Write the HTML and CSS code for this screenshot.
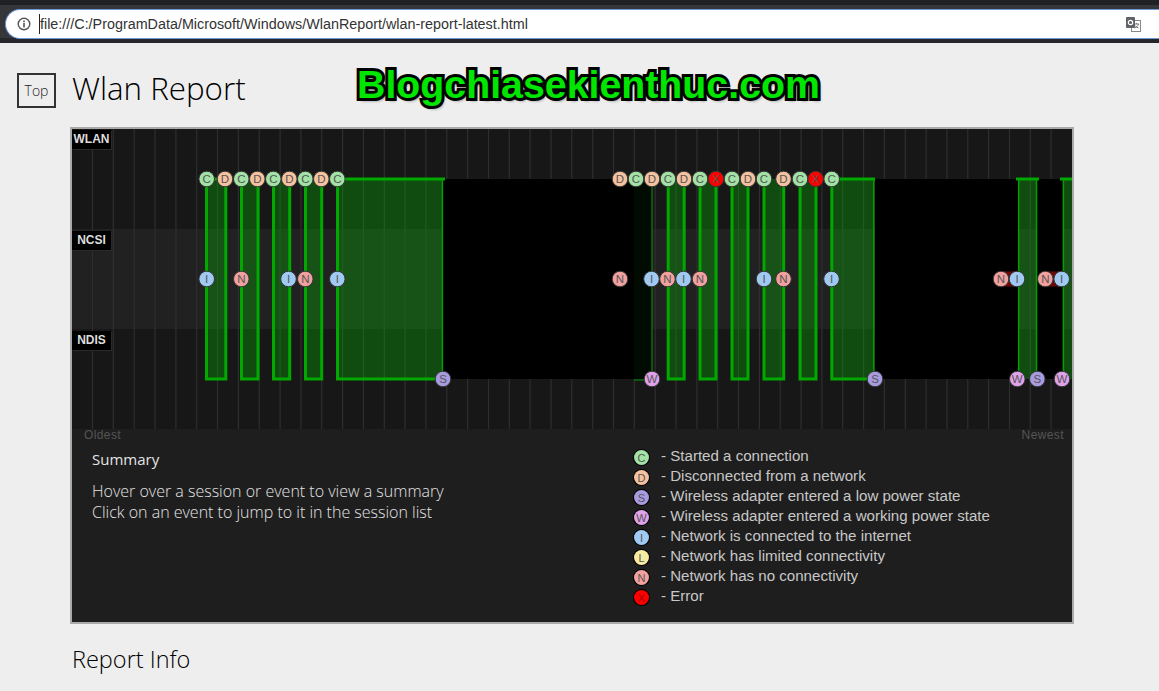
FILE: index.html
```html
<!DOCTYPE html>
<html lang="en">
<head>
    <meta charset="UTF-8">
    <title>Wlan Report</title>
    <link rel="stylesheet" href="styles.css">
</head>
<body>
    <div class="toolbar">
        <div class="omnibox">
            <svg class="info-icon" width="14" height="14" viewBox="0 0 14 14">
                <circle cx="7" cy="7" r="5.8" fill="none" stroke="#555" stroke-width="1.4"/>
                <rect x="6.2" y="6" width="1.6" height="4.4" fill="#555"/>
                <rect x="6.2" y="3.6" width="1.6" height="1.6" fill="#555"/>
            </svg>
            <span class="url">file:///C:/ProgramData/Microsoft/Windows/WlanReport/wlan-report-latest.html</span>
            <svg class="translate-icon" width="15" height="15" viewBox="0 0 15 15">
                <rect x="5.5" y="3.5" width="9" height="11" fill="#fff" stroke="#888"/>
                <path d="M8 7h5M10.5 6v1M12.5 7c-.5 2-2 3.500-4 4M9 8.500c.8 1.200 2 2 3.500 2.500" fill="none" stroke="#777"/>
                <rect x="0" y="0" width="9" height="11" rx="1" fill="#5f6368"/>
                <circle cx="4.500" cy="5.500" r="2.200" fill="none" stroke="#fff" stroke-width="1.200"/>
            </svg>
        </div>
    </div>

    <div class="page">
        <div class="watermark">Blogchiasekienthuc.com</div>

        <div class="page-head">
            <a class="top-btn">Top</a>
            <h1 class="title">Wlan Report</h1>
        </div>

        <div class="chart">
            <svg class="timeline" width="1000" height="300" viewBox="72 129 1000 300">
                <!-- rows -->
                <rect class="row" x="72" y="129" width="1000" height="100"/>
                <rect class="row-mid" x="72" y="229" width="1000" height="100"/>
                <rect class="row" x="72" y="329" width="1000" height="100"/>

                <!-- grid -->
                <path class="grid" d="M92.500 149V429M113.300 129V429M134.200 129V429M155 129V429M175.900 129V429M196.700 129V429M217.500 129V429M238.400 129V429M259.200 129V429M280.100 129V429M300.900 129V429M321.700 129V429M342.600 129V429M363.400 129V429M384.300 129V429M405.100 129V429M425.900 129V429M446.800 129V429M467.600 129V429M488.500 129V429M509.300 129V429M530.100 129V429M551 129V429M571.800 129V429M592.700 129V429M613.500 129V429M634.300 129V429M655.200 129V429M676 129V429M696.900 129V429M717.700 129V429M738.500 129V429M759.400 129V429M780.200 129V429M801.100 129V429M821.900 129V429M842.700 129V429M863.600 129V429M884.400 129V429M905.300 129V429M926.100 129V429M946.900 129V429M967.800 129V429M988.600 129V429M1009.500 129V429M1030.300 129V429M1051.100 129V429"/>

                <!-- time with no data -->
                <rect class="gap" x="443" y="179" width="191" height="200"/>
                <rect class="gap-dim" x="634" y="179" width="18" height="200"/>
                <rect class="gap" x="875" y="179" width="143" height="200"/>
                <rect class="gap" x="1037" y="179" width="26" height="200"/>

                <!-- sessions -->
                <rect class="session" x="206" y="179" width="20" height="200"/>
                <rect class="session" x="241" y="179" width="17" height="200"/>
                <rect class="session" x="273" y="179" width="17" height="200"/>
                <rect class="session" x="305" y="179" width="17" height="200"/>
                <rect class="session" x="337" y="179" width="106" height="200"/>
                <rect class="session" x="668" y="179" width="16" height="200"/>
                <rect class="session" x="700" y="179" width="16" height="200"/>
                <rect class="session" x="732" y="179" width="16" height="200"/>
                <rect class="session" x="764" y="179" width="20" height="200"/>
                <rect class="session" x="800" y="179" width="16" height="200"/>
                <rect class="session" x="832" y="179" width="42" height="200"/>
                <rect class="session" x="1018" y="179" width="19" height="200"/>
                <rect class="session" x="1063" y="179" width="9" height="200"/>

                <path class="edge" d="M206.500 179V379H225.800V179H206.500M241.500 179V379H258V179M273.500 179V379H289.700V179M305.500 179V379H321.700V179M337.500 179V379H443M337.500 179H445M668.200 179V379H684.200V179M700 179V379H716V179M732 179V379H748V179M764 179V379H783.700V179M800 179V379H816V179M831.800 179V379H875M831.800 179H875M1016 179H1039M1060 179H1072M1030 379H1040"/>
                <path class="edge-thin" d="M442.400 179V379M873.800 179V379M1018.700 179V379M1036.500 179V379M1063.400 179V379"/>
                <path class="edge-dim" d="M652 179V379M634 380H652"/>
                <path class="offline" d="M1001 279H1017M1045 279H1062"/>

                <!-- WLAN events -->
                <circle class="c" cx="206.700" cy="179" r="7.800"/><text x="206.700" y="183">C</text>
                <circle class="d" cx="225" cy="179" r="7.800"/><text x="225" y="183">D</text>
                <circle class="c" cx="241.300" cy="179" r="7.800"/><text x="241.300" y="183">C</text>
                <circle class="d" cx="257.300" cy="179" r="7.800"/><text x="257.300" y="183">D</text>
                <circle class="c" cx="273.300" cy="179" r="7.800"/><text x="273.300" y="183">C</text>
                <circle class="d" cx="289.300" cy="179" r="7.800"/><text x="289.300" y="183">D</text>
                <circle class="c" cx="305.300" cy="179" r="7.800"/><text x="305.300" y="183">C</text>
                <circle class="d" cx="321.300" cy="179" r="7.800"/><text x="321.300" y="183">D</text>
                <circle class="c" cx="337.300" cy="179" r="7.800"/><text x="337.300" y="183">C</text>
                <circle class="d" cx="620" cy="179" r="7.800"/><text x="620" y="183">D</text>
                <circle class="c" cx="636" cy="179" r="7.800"/><text x="636" y="183">C</text>
                <circle class="d" cx="652" cy="179" r="7.800"/><text x="652" y="183">D</text>
                <circle class="c" cx="668" cy="179" r="7.800"/><text x="668" y="183">C</text>
                <circle class="d" cx="684" cy="179" r="7.800"/><text x="684" y="183">D</text>
                <circle class="c" cx="700" cy="179" r="7.800"/><text x="700" y="183">C</text>
                <circle class="x" cx="716" cy="179" r="7.800"/><text x="716" y="183">X</text>
                <circle class="c" cx="732" cy="179" r="7.800"/><text x="732" y="183">C</text>
                <circle class="d" cx="748" cy="179" r="7.800"/><text x="748" y="183">D</text>
                <circle class="c" cx="764" cy="179" r="7.800"/><text x="764" y="183">C</text>
                <circle class="d" cx="783.500" cy="179" r="7.800"/><text x="783.500" y="183">D</text>
                <circle class="c" cx="800" cy="179" r="7.800"/><text x="800" y="183">C</text>
                <circle class="x" cx="815.700" cy="179" r="7.800"/><text x="815.700" y="183">X</text>
                <circle class="c" cx="831.700" cy="179" r="7.800"/><text x="831.700" y="183">C</text>

                <!-- NCSI events -->
                <circle class="i" cx="206.700" cy="279" r="7.800"/><text x="206.700" y="283">I</text>
                <circle class="n" cx="241.300" cy="279" r="7.800"/><text x="241.300" y="283">N</text>
                <circle class="i" cx="288.500" cy="279" r="7.800"/><text x="288.500" y="283">I</text>
                <circle class="n" cx="305.300" cy="279" r="7.800"/><text x="305.300" y="283">N</text>
                <circle class="i" cx="337.300" cy="279" r="7.800"/><text x="337.300" y="283">I</text>
                <circle class="n" cx="620" cy="279" r="7.800"/><text x="620" y="283">N</text>
                <circle class="i" cx="651.500" cy="279" r="7.800"/><text x="651.500" y="283">I</text>
                <circle class="n" cx="667.500" cy="279" r="7.800"/><text x="667.500" y="283">N</text>
                <circle class="i" cx="683.500" cy="279" r="7.800"/><text x="683.500" y="283">I</text>
                <circle class="n" cx="700" cy="279" r="7.800"/><text x="700" y="283">N</text>
                <circle class="i" cx="764" cy="279" r="7.800"/><text x="764" y="283">I</text>
                <circle class="n" cx="783.500" cy="279" r="7.800"/><text x="783.500" y="283">N</text>
                <circle class="i" cx="831.500" cy="279" r="7.800"/><text x="831.500" y="283">I</text>
                <circle class="n" cx="1001" cy="279" r="7.800"/><text x="1001" y="283">N</text>
                <circle class="i" cx="1017" cy="279" r="7.800"/><text x="1017" y="283">I</text>
                <circle class="n" cx="1045.300" cy="279" r="7.800"/><text x="1045.300" y="283">N</text>
                <circle class="i" cx="1061.700" cy="279" r="7.800"/><text x="1061.700" y="283">I</text>

                <!-- NDIS events -->
                <circle class="s" cx="443" cy="379" r="7.800"/><text x="443" y="383">S</text>
                <circle class="w" cx="652" cy="379" r="7.800"/><text x="652" y="383">W</text>
                <circle class="s" cx="875" cy="379" r="7.800"/><text x="875" y="383">S</text>
                <circle class="w" cx="1017.300" cy="379" r="7.800"/><text x="1017.300" y="383">W</text>
                <circle class="s" cx="1037.300" cy="379" r="7.800"/><text x="1037.300" y="383">S</text>
                <circle class="w" cx="1062" cy="379" r="7.800"/><text x="1062" y="383">W</text>
            </svg>

            <div class="row-label label-wlan">WLAN</div>
            <div class="row-label label-ncsi">NCSI</div>
            <div class="row-label label-ndis">NDIS</div>

            <div class="chart-panel">
                <div class="time-ends">
                    <span>Oldest</span>
                    <span>Newest</span>
                </div>
                <div class="panel-body">
                    <div class="summary">
                        <h3 class="summary-title">Summary</h3>
                        <p class="summary-text">Hover over a session or event to view a summary<br>Click on an event to jump to it in the session list</p>
                    </div>
                    <ul class="legend">
                        <li><span class="dot dot-c">C</span>- Started a connection</li>
                        <li><span class="dot dot-d">D</span>- Disconnected from a network</li>
                        <li><span class="dot dot-s">S</span>- Wireless adapter entered a low power state</li>
                        <li><span class="dot dot-w">W</span>- Wireless adapter entered a working power state</li>
                        <li><span class="dot dot-i">I</span>- Network is connected to the internet</li>
                        <li><span class="dot dot-l">L</span>- Network has limited connectivity</li>
                        <li><span class="dot dot-n">N</span>- Network has no connectivity</li>
                        <li><span class="dot dot-x">X</span>- Error</li>
                    </ul>
                </div>
            </div>
        </div>

        <h2 class="section-title">Report Info</h2>
    </div>
</body>
</html>
```

FILE: styles.css
```css
:root {
    --page-bg: #eeeeee;
    --panel-bg: #1e1e1e;
    --chrome-dark: #202124;
    --chrome-mid: #35363a;
    --ev-c: #a2e2a6;
    --ev-d: #f5c19f;
    --ev-s: #a99be0;
    --ev-w: #e0a2ea;
    --ev-i: #a0caf2;
    --ev-l: #f8eca2;
    --ev-n: #f2a19f;
    --ev-x: #ff0000;
}

html, body {
    height: 100%;
    overflow: hidden;
}

body {
    margin: 0;
    background-color: var(--page-bg);
    font-family: "Open Sans", "Liberation Sans", sans-serif;
    color: #111;
}

.toolbar {
    height: 43px;
    box-sizing: border-box;
    padding: 9px 0 4px 5px;
    background: linear-gradient(var(--chrome-dark) 5px, var(--chrome-mid) 5px, var(--chrome-mid) 38px, #26272a 38px);
}

.omnibox {
    height: 30px;
    box-sizing: border-box;
    display: flex;
    align-items: center;
    padding: 0 12px 0 11px;
    background-color: #fff;
    border: 1px solid #6e97d8;
    border-right: none;
    border-radius: 15px 0 0 15px;
}

.info-icon {
    flex: none;
    margin-right: 8px;
}

.url {
    font-family: "Liberation Sans", Arial, sans-serif;
    font-size: 14.35px;
    color: #333;
    border-left: 1px solid #222;
    line-height: 20px;
}

.translate-icon {
    margin-left: auto;
    margin-right: 6px;
}

.page {
    position: relative;
    padding: 30px 0 0 17px;
}

.watermark {
    position: absolute;
    top: 18px;
    left: 357px;
    font-family: "Liberation Sans", Arial, sans-serif;
    font-size: 39.3px;
    font-weight: 700;
    line-height: 46px;
    color: #00e600;
    -webkit-text-stroke: 6px #000;
    paint-order: stroke fill;
    text-shadow: 2px 3px 3px rgba(0, 0, 0, 0.45);
}

.page-head {
    display: flex;
    align-items: center;
    gap: 16px;
    height: 35px;
}

.top-btn {
    width: 39px;
    height: 35px;
    box-sizing: border-box;
    border: 2px solid #333;
    display: flex;
    justify-content: center;
    align-items: center;
    font-size: 14px;
    font-weight: 300;
    color: #222;
}

.title {
    margin: -4px 0 0;
    font-size: 31.3px;
    font-weight: 300;
    line-height: 35px;
    color: #000;
}

.chart {
    position: relative;
    width: 1004px;
    height: 497px;
    box-sizing: border-box;
    margin: 19px 0 0 53px;
    border: 2px solid #a9a9a9;
    background-color: var(--panel-bg);
}

.timeline {
    display: block;
}

.timeline text {
    font-family: "Liberation Sans", Arial, sans-serif;
    font-size: 11.5px;
    text-anchor: middle;
    fill: #555;
}

.row { fill: #171717; }
.row-mid { fill: #212121; }
.grid { stroke: #2e2e2e; stroke-width: 1.2; fill: none; }
.gap { fill: #000; }
.gap-dim { fill: #010b01; }
.session { fill: rgba(0, 200, 0, 0.3); }
.edge { fill: none; stroke: #00a800; stroke-width: 3; }
.edge-thin { fill: none; stroke: #00a000; stroke-width: 1.5; }
.edge-dim { fill: none; stroke: #0a6e0a; stroke-width: 1.5; }
.offline { fill: none; stroke: #6b0808; stroke-width: 15; }

.timeline circle { stroke: #333; stroke-width: 1; }
.c { fill: var(--ev-c); }
.d { fill: var(--ev-d); }
.s { fill: var(--ev-s); }
.w { fill: var(--ev-w); }
.i { fill: var(--ev-i); }
.n { fill: var(--ev-n); }
.x { fill: var(--ev-x); }

.row-label {
    position: absolute;
    left: 0;
    width: 39px;
    height: 19px;
    background-color: #000;
    color: #ddd;
    font-family: "Liberation Sans", Arial, sans-serif;
    font-size: 12px;
    font-weight: 700;
    line-height: 19px;
    text-align: center;
    box-shadow: 1px 1px 0 #2a2a2a;
}

.label-wlan { top: 1px; }
.label-ncsi { top: 102px; }
.label-ndis { top: 202px; }

.chart-panel {
    color: #ddd;
}

.time-ends {
    display: flex;
    justify-content: space-between;
    padding: 0 8px 0 12px;
    height: 12px;
    font-family: "Liberation Sans", Arial, sans-serif;
    font-size: 12px;
    line-height: 12px;
    letter-spacing: 0.4px;
    color: #555;
}

.panel-body {
    display: flex;
    padding-left: 20px;
}

.summary {
    width: 542px;
    flex: none;
}

.summary-title {
    margin: 7px 0 0;
    font-size: 15px;
    font-weight: 400;
    line-height: 22px;
    color: #e4e4e4;
}

.summary-text {
    margin: 11px 0 0;
    font-size: 16px;
    font-weight: 300;
    line-height: 20.500px;
    color: #e4e4e4;
}

.legend {
    list-style: none;
    margin: 5px 0 0;
    padding: 0;
    font-family: "Liberation Sans", Arial, sans-serif;
    font-size: 15.1px;
    color: #c8c8c8;
}

.legend li {
    display: flex;
    align-items: flex-start;
    height: 20px;
    line-height: 20px;
}

.dot {
    width: 15px;
    height: 15px;
    flex: none;
    margin: 4px 12px 0 0;
    border-radius: 50%;
    box-shadow: 0 0 0 1px #000;
    font-size: 11px;
    line-height: 16px;
    text-align: center;
    color: #555;
}

.dot-c { background-color: var(--ev-c); }
.dot-d { background-color: var(--ev-d); }
.dot-s { background-color: var(--ev-s); }
.dot-w { background-color: var(--ev-w); }
.dot-i { background-color: var(--ev-i); }
.dot-l { background-color: var(--ev-l); }
.dot-n { background-color: var(--ev-n); }
.dot-x { background-color: var(--ev-x); color: #a00; }

.section-title {
    margin: 19px 0 0 55px;
    font-size: 23.5px;
    font-weight: 300;
    line-height: 33px;
    color: #000;
}
```
